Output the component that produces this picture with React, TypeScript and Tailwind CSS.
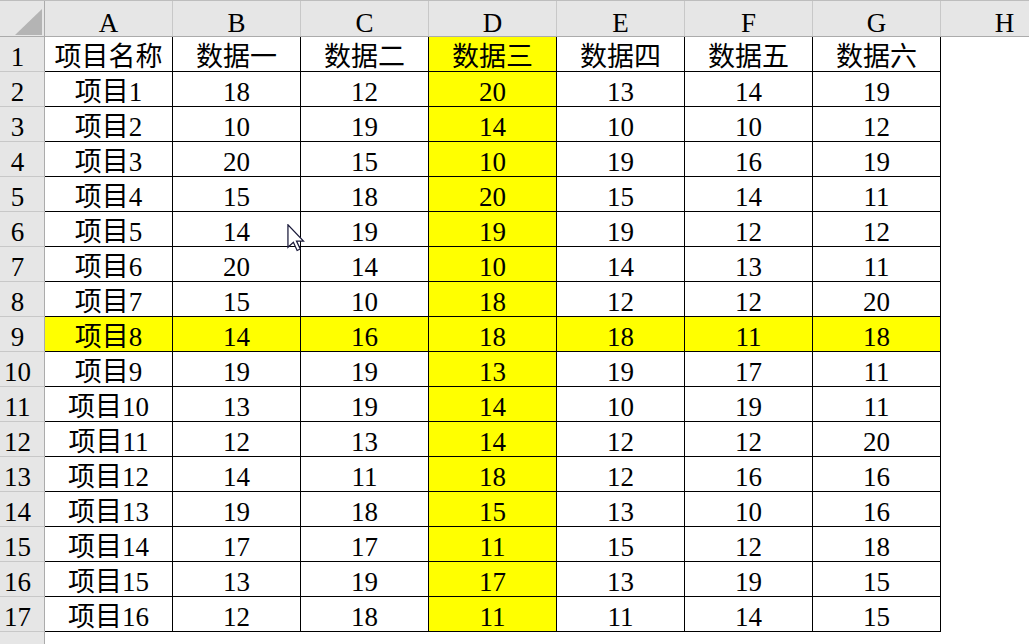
const columns = ["A", "B", "C", "D", "E", "F", "G"];

const rows: string[][] = [
  ["项目名称", "数据一", "数据二", "数据三", "数据四", "数据五", "数据六"],
  ["项目1", "18", "12", "20", "13", "14", "19"],
  ["项目2", "10", "19", "14", "10", "10", "12"],
  ["项目3", "20", "15", "10", "19", "16", "19"],
  ["项目4", "15", "18", "20", "15", "14", "11"],
  ["项目5", "14", "19", "19", "19", "12", "12"],
  ["项目6", "20", "14", "10", "14", "13", "11"],
  ["项目7", "15", "10", "18", "12", "12", "20"],
  ["项目8", "14", "16", "18", "18", "11", "18"],
  ["项目9", "19", "19", "13", "19", "17", "11"],
  ["项目10", "13", "19", "14", "10", "19", "11"],
  ["项目11", "12", "13", "14", "12", "12", "20"],
  ["项目12", "14", "11", "18", "12", "16", "16"],
  ["项目13", "19", "18", "15", "13", "10", "16"],
  ["项目14", "17", "17", "11", "15", "12", "18"],
  ["项目15", "13", "19", "17", "13", "19", "15"],
  ["项目16", "12", "18", "11", "11", "14", "15"],
];

// row 9 and column D are highlighted
const isYellow = (rowNum: number, colIdx: number) => rowNum === 9 || colIdx === 3;

const App = () => {
  return (
    <div className="relative w-[1029px] h-[644px] overflow-hidden bg-white text-black text-[27px] font-['Liberation_Serif','Noto_Sans_CJK_SC',serif]">
      {/* Column headers */}
      <div className="flex h-[37px] bg-[#e6e6e6] border-t border-b border-t-[#bdbdbd] border-b-[#ababab]">
        <div className="w-[45px] shrink-0 flex items-end justify-end pr-[2px] pb-[1px] border-r border-[#ababab]">
          <svg width="27" height="26" viewBox="0 0 27 26">
            <polygon points="27,0 27,26 0,26" fill="#b4b4b4" />
          </svg>
        </div>
        {columns.map((c) => (
          <div
            key={c}
            className="w-[128px] shrink-0 flex items-center justify-center pt-[9px] leading-none border-r border-[#c8c8c8]"
          >
            {c}
          </div>
        ))}
        <div className="w-[128px] shrink-0 flex items-center justify-center pt-[9px] leading-none border-r border-[#c8c8c8]">
          H
        </div>
      </div>

      {/* Data rows */}
      {rows.map((row, i) => (
        <div key={i} className="flex h-[35px]">
          <div className="w-[45px] shrink-0 flex items-center justify-center pr-[9px] pt-[7px] leading-none bg-[#e6e6e6] border-r border-b border-r-[#ababab] border-b-[#c8c8c8]">
            {i + 1}
          </div>
          {row.map((cell, j) => (
            <div
              key={j}
              className={`w-[128px] shrink-0 flex items-center justify-center pt-[7px] leading-none border-r border-b border-black ${
                isYellow(i + 1, j) ? "bg-[#ffff00]" : "bg-white"
              }`}
            >
              {cell}
            </div>
          ))}
          <div className="flex-1" />
        </div>
      ))}

      {/* Row 18, cut off by the window */}
      <div className="flex h-[35px]">
        <div className="w-[45px] shrink-0 flex items-center justify-center pr-[9px] pt-[7px] leading-none bg-[#e6e6e6] border-r border-[#ababab]">
          18
        </div>
        <div className="flex-1" />
      </div>

      {/* Mouse pointer */}
      <svg className="absolute left-[287px] top-[224px]" width="19" height="28" viewBox="0 0 12 18">
        <path
          d="M0.5 0.5 L0.5 15 L4 11.8 L6.4 17 L8.4 16.1 L6 11 L10.5 11 Z"
          fill="white"
          stroke="#1a1a3a"
          strokeWidth="0.8"
          strokeLinejoin="miter"
        />
      </svg>
    </div>
  );
};

export default App;
